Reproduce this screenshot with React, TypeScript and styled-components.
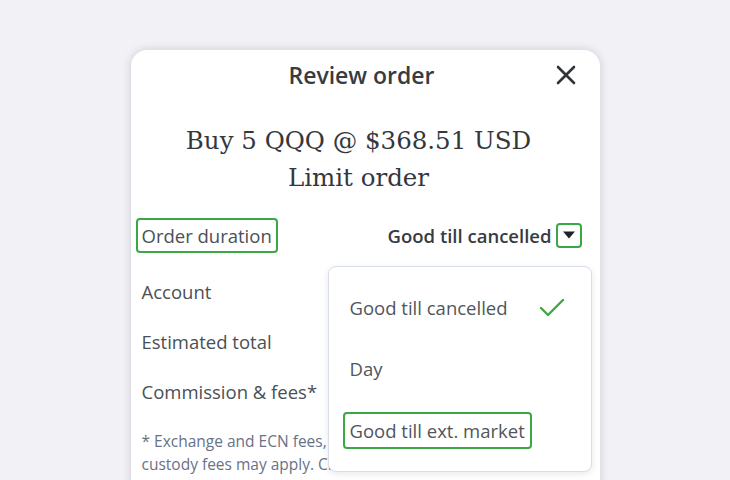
import React from 'react';
import styled, { createGlobalStyle, css } from 'styled-components';

const GlobalStyle = createGlobalStyle`
  html, body {
    margin: 0;
    padding: 0;
    background: #f1f1f6;
    overflow: hidden;
  }
  body {
    font-family: 'Open Sans', 'Liberation Sans', sans-serif;
    color: #3b4146;
  }
`;

const Page = styled.div`
  height: 480px;
  padding-top: 50px;
  box-sizing: border-box;
  display: flex;
  justify-content: center;
`;

const Modal = styled.div`
  position: relative;
  width: 469px;
  height: 460px;
  box-sizing: border-box;
  background: #fff;
  border-radius: 16px 16px 0 0;
  box-shadow: 0 0 10px rgba(40, 44, 60, 0.18);
  padding: 11px 18px 0 5px;
`;

const Header = styled.div`
  position: relative;
  height: 28px;
  display: flex;
  justify-content: center;
  align-items: center;
`;

const Title = styled.h2`
  margin: 0;
  font-size: 23px;
  font-weight: 600;
  line-height: 28px;
  color: #363c42;
  padding-left: 6px;
`;

const CloseButton = styled.button`
  position: absolute;
  right: 4px;
  top: 2px;
  width: 24px;
  height: 24px;
  padding: 0;
  border: 0;
  background: none;
  display: flex;
  align-items: center;
  justify-content: center;
`;

const Headline = styled.div`
  margin-top: 33px;
  text-align: center;
  font-family: 'DejaVu Serif', 'Liberation Serif', serif;
  font-size: 24.5px;
  line-height: 37px;
  color: #32383e;
`;

const Rows = styled.div`
  margin-top: 8px;
  display: flex;
  flex-direction: column;
`;

const Row = styled.div<{ $h: number }>`
  display: flex;
  align-items: center;
  justify-content: space-between;
  height: ${(p) => p.$h}px;
`;

const focusRing = css`
  border-color: #3aa845;
`;

const Label = styled.span<{ $focus?: boolean }>`
  font-size: 18.5px;
  line-height: 31px;
  color: #4a5056;
  padding: 0 4px;
  border: 2px solid transparent;
  border-radius: 4px;
  ${(p) => p.$focus && focusRing}
`;

const Value = styled.div`
  display: flex;
  align-items: center;
  gap: 4px;
  font-size: 18.5px;
  font-weight: 600;
  color: #363c42;
`;

const CaretBox = styled.span`
  width: 22px;
  height: 21px;
  border: 2px solid #3aa845;
  border-radius: 4px;
  display: flex;
  align-items: center;
  justify-content: center;
`;

const Footnote = styled.p`
  margin: 14px 0 0 6px;
  font-size: 15.5px;
  line-height: 23px;
  color: #687285;
`;

const Menu = styled.div`
  position: absolute;
  left: 197px;
  top: 216px;
  width: 264px;
  height: 206px;
  box-sizing: border-box;
  background: #fff;
  border: 1px solid #d9dee9;
  border-radius: 8px;
  box-shadow: 0 2px 6px rgba(60, 70, 90, 0.12);
  padding: 10px 0;
  display: flex;
  flex-direction: column;
`;

const MenuItem = styled.div`
  height: 62px;
  display: flex;
  align-items: center;
  justify-content: space-between;
  padding: 0 26px 0 14px;
`;

const ItemLabel = styled.span<{ $focus?: boolean }>`
  font-size: 18.5px;
  line-height: 33px;
  color: #50565c;
  padding: 0 5px;
  border: 2px solid transparent;
  border-radius: 4px;
  ${(p) => p.$focus && focusRing}
`;

const durations = [
  { label: 'Good till cancelled', selected: true },
  { label: 'Day' },
  { label: 'Good till ext. market', focus: true },
];

const App: React.FC = () => (
  <>
    <GlobalStyle />
    <Page>
      <Modal>
        <Header>
          <Title>Review order</Title>
          <CloseButton aria-label="Close">
            <svg width="20" height="20" viewBox="0 0 20 20">
              <path d="M2 2 L18 18 M18 2 L2 18" stroke="#2f353b" strokeWidth="2.6" strokeLinecap="round" />
            </svg>
          </CloseButton>
        </Header>
        <Headline>
          Buy 5 QQQ @ $368.51 USD
          <br />
          Limit order
        </Headline>
        <Rows>
          <Row $h={62}>
            <Label $focus>Order duration</Label>
            <Value>
              Good till cancelled
              <CaretBox>
                <svg width="14" height="10" viewBox="0 0 14 10">
                  <path d="M1 1.5 H13 L7 8.5 Z" fill="#1f2327" />
                </svg>
              </CaretBox>
            </Value>
          </Row>
          <Row $h={50}>
            <Label>Account</Label>
          </Row>
          <Row $h={50}>
            <Label>Estimated total</Label>
          </Row>
          <Row $h={50}>
            <Label>Commission &amp; fees*</Label>
          </Row>
        </Rows>
        <Footnote>
          * Exchange and ECN fees, SEC and FINRA fees, and ADR
          <br />
          custody fees may apply. Click here for more details.
        </Footnote>
        <Menu>
          {durations.map((d) => (
            <MenuItem key={d.label}>
              <ItemLabel $focus={d.focus}>{d.label}</ItemLabel>
              {d.selected && (
                <svg width="26" height="20" viewBox="0 0 26 20">
                  <path d="M2 10 L9 17 L24 2" fill="none" stroke="#3aa845" strokeWidth="2.4" strokeLinecap="round" strokeLinejoin="round" />
                </svg>
              )}
            </MenuItem>
          ))}
        </Menu>
      </Modal>
    </Page>
  </>
);

export default App;
